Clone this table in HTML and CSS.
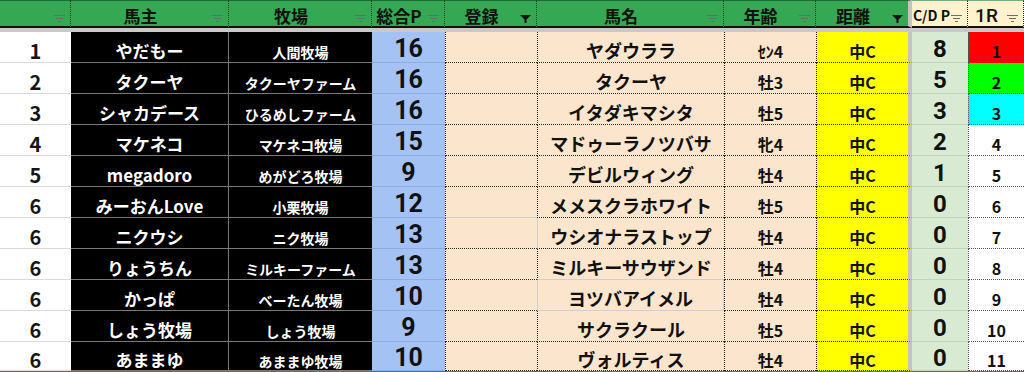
FILE: index.html
```html
<!DOCTYPE html>
<html lang="ja">
<head>
<meta charset="utf-8">
<title>ランキング</title>
<link rel="stylesheet" href="styles.css">
</head>
<body>
<div class="sheet">
  <div class="h"><svg class="fi" viewBox="0 0 11 8"><path d="M0 0.5H11M2 3.5H9M4 6.5H7" stroke="#6b6b6b" stroke-width="1"/></svg></div>
  <div class="h">馬主<svg class="fi" viewBox="0 0 11 8"><path d="M0 0.5H11M2 3.5H9M4 6.5H7" stroke="#6b6b6b" stroke-width="1"/></svg></div>
  <div class="h">牧場<svg class="fi" viewBox="0 0 11 8"><path d="M0 0.5H11M2 3.5H9M4 6.5H7" stroke="#6b6b6b" stroke-width="1"/></svg></div>
  <div class="h">総合P<svg class="fi" viewBox="0 0 11 8"><path d="M0 0.5H11M2 3.5H9M4 6.5H7" stroke="#6b6b6b" stroke-width="1"/></svg></div>
  <div class="h">登録<svg class="fi" viewBox="0 0 11 8"><path d="M0 0H11L6.5 4.5V8H4.5V4.5Z" fill="#111"/></svg></div>
  <div class="h">馬名<svg class="fi" viewBox="0 0 11 8"><path d="M0 0.5H11M2 3.5H9M4 6.5H7" stroke="#6b6b6b" stroke-width="1"/></svg></div>
  <div class="h">年齢<svg class="fi" viewBox="0 0 11 8"><path d="M0 0.5H11M2 3.5H9M4 6.5H7" stroke="#6b6b6b" stroke-width="1"/></svg></div>
  <div class="h hsep">距離<svg class="fi" viewBox="0 0 11 8"><path d="M0 0H11L6.5 4.5V8H4.5V4.5Z" fill="#111"/></svg></div>
  <div class="h hc small">C/D P<svg class="fi" viewBox="0 0 11 8"><path d="M0 0.5H11M2 3.5H9M4 6.5H7" stroke="#6b6b6b" stroke-width="1"/></svg></div>
  <div class="h hc big">1R<svg class="fi" viewBox="0 0 11 8"><path d="M0 0.5H11M2 3.5H9M4 6.5H7" stroke="#6b6b6b" stroke-width="1"/></svg></div>

  <div class="band"></div>

  <div class="c rank">1</div><div class="c own">やだもー</div><div class="c farm">人間牧場</div><div class="c pts">16</div><div class="c reg"></div><div class="c name">ヤダウララ</div><div class="c age">ｾﾝ4</div><div class="c dist">中C</div><div class="c cdp">8</div><div class="c r1 red">1</div>
  <div class="c rank">2</div><div class="c own">タクーヤ</div><div class="c farm">タクーヤファーム</div><div class="c pts">16</div><div class="c reg"></div><div class="c name">タクーヤ</div><div class="c age">牡3</div><div class="c dist">中C</div><div class="c cdp">5</div><div class="c r1 green">2</div>
  <div class="c rank">3</div><div class="c own">シャカデース</div><div class="c farm">ひるめしファーム</div><div class="c pts">16</div><div class="c reg"></div><div class="c name">イタダキマシタ</div><div class="c age">牡5</div><div class="c dist">中C</div><div class="c cdp">3</div><div class="c r1 cyan">3</div>
  <div class="c rank">4</div><div class="c own">マケネコ</div><div class="c farm">マケネコ牧場</div><div class="c pts">15</div><div class="c reg"></div><div class="c name">マドゥーラノツバサ</div><div class="c age">牝4</div><div class="c dist">中C</div><div class="c cdp">2</div><div class="c r1">4</div>
  <div class="c rank">5</div><div class="c own">megadoro</div><div class="c farm">めがどろ牧場</div><div class="c pts">9</div><div class="c reg"></div><div class="c name">デビルウィング</div><div class="c age">牡4</div><div class="c dist">中C</div><div class="c cdp">1</div><div class="c r1">5</div>
  <div class="c rank">6</div><div class="c own">みーおんLove</div><div class="c farm">小栗牧場</div><div class="c pts">12</div><div class="c reg soft-b"></div><div class="c name">メメスクラホワイト</div><div class="c age">牡5</div><div class="c dist">中C</div><div class="c cdp">0</div><div class="c r1">6</div>
  <div class="c rank">6</div><div class="c own">ニクウシ</div><div class="c farm">ニク牧場</div><div class="c pts">13</div><div class="c reg"></div><div class="c name soft-l">ウシオナラストップ</div><div class="c age">牡4</div><div class="c dist">中C</div><div class="c cdp">0</div><div class="c r1">7</div>
  <div class="c rank">6</div><div class="c own">りょうちん</div><div class="c farm">ミルキーファーム</div><div class="c pts">13</div><div class="c reg"></div><div class="c name soft-b">ミルキーサウザンド</div><div class="c age">牡4</div><div class="c dist">中C</div><div class="c cdp">0</div><div class="c r1">8</div>
  <div class="c rank">6</div><div class="c own">かっぱ</div><div class="c farm">べーたん牧場</div><div class="c pts">10</div><div class="c reg"></div><div class="c name soft-l soft-b soft-r">ヨツバアイメル</div><div class="c age">牡4</div><div class="c dist">中C</div><div class="c cdp">0</div><div class="c r1">9</div>
  <div class="c rank">6</div><div class="c own">しょう牧場</div><div class="c farm">しょう牧場</div><div class="c pts">9</div><div class="c reg"></div><div class="c name">サクラクール</div><div class="c age">牡5</div><div class="c dist">中C</div><div class="c cdp">0</div><div class="c r1">10</div>
  <div class="c rank">6</div><div class="c own">あままゆ</div><div class="c farm">あままゆ牧場</div><div class="c pts">10</div><div class="c reg"></div><div class="c name">ヴォルティス</div><div class="c age">牡4</div><div class="c dist">中C</div><div class="c cdp">0</div><div class="c r1">11</div>

  <div class="foot"></div>
</div>
</body>
</html>
```

FILE: styles.css
```css
html, body {
  margin: 0;
  padding: 0;
  background: #ffffff;
  overflow: hidden;
}

body {
  font-family: "Noto Sans CJK JP", "Noto Sans", sans-serif;
  font-weight: 700;
  color: #111111;
}

.sheet {
  display: grid;
  grid-template-columns: 71px 158px 143px 73px 92px 187px 92px 96px 56px 56px;
  grid-template-rows: 28px 4px repeat(10, 31px) 29px 4px;
  width: 1024px;
}

/* header */
.h {
  position: relative;
  box-sizing: border-box;
  display: flex;
  align-items: center;
  justify-content: center;
  padding: 3px 18px 0 0;
  background: #34a853;
  border-top: 1px solid #1e6b36;
  border-bottom: 2px solid #111111;
  border-right: 1px dotted #1b3a22;
  font-size: 17px;
  line-height: 1;
  white-space: nowrap;
}

.h.hsep {
  border-right: 4px solid #c4c4c4;
}

.h.hc {
  background: #fff2cc;
  border-top: 1px solid #7aa57f;
}

.h.small {
  font-size: 14px;
  padding-right: 16px;
}

.h.big {
  font-family: Roboto, "Noto Sans", sans-serif;
  font-size: 19px;
  font-weight: 500;
}

.h:last-child {
  border-right: none;
}

.fi {
  position: absolute;
  right: 5px;
  top: 14px;
  width: 11px;
  height: 8px;
}

.band {
  grid-column: 1 / -1;
  background: #c9c9c9;
}

.foot {
  grid-column: 1 / -1;
  background: #2f8f48;
}

/* body cells */
.c {
  box-sizing: border-box;
  display: flex;
  align-items: center;
  justify-content: center;
  padding-top: 7px;
  line-height: 1;
  white-space: nowrap;
}

.rank {
  background: #ffffff;
  border-bottom: 1px solid #d9d9d9;
  font-size: 20px;
  color: #151515;
}

.own {
  background: #000000;
  color: #ffffff;
  border-bottom: 1px solid #7a7a7a;
  border-right: 1px solid #7a7a7a;
  font-size: 17px;
}

.farm {
  background: #000000;
  color: #ffffff;
  border-bottom: 1px solid #7a7a7a;
  font-size: 14px;
  padding-top: 9px;
}

.pts {
  background: #a4c2f4;
  border-bottom: 1px solid #8fadde;
  font-family: Roboto, "Noto Sans", sans-serif;
  font-size: 25px;
  padding-top: 3px;
}

.reg,
.name,
.age {
  background: #fce5cd;
  border-left: 1px dotted #2a2a2a;
  border-bottom: 1px dotted #2a2a2a;
}

.name {
  font-size: 18px;
  padding-top: 6px;
}

.age {
  font-size: 16px;
  padding-top: 8px;
}

.dist {
  background: #ffff00;
  border-left: 1px dotted #2a2a2a;
  border-bottom: 1px dotted #2a2a2a;
  border-right: 4px solid #c4c4c4;
  font-size: 16px;
  padding-top: 8px;
}

.cdp {
  background: #d9ead3;
  border-bottom: 1px solid #c0d4bb;
  font-family: Roboto, "Noto Sans", sans-serif;
  font-size: 24px;
  padding-top: 3px;
}

.r1 {
  background: #ffffff;
  border-left: 1px dotted #555555;
  border-bottom: 1px dotted #555555;
  font-size: 16px;
  padding-top: 8px;
}

.r1.red { background: #ff0000; }
.r1.green { background: #00ff00; }
.r1.cyan { background: #00ffff; }

.soft-b { border-bottom: 1px solid #cfcfcf; }
.soft-l { border-left: 1px solid #cfcfcf; }
.soft-r { border-right: 1px solid #cfcfcf; }
```
